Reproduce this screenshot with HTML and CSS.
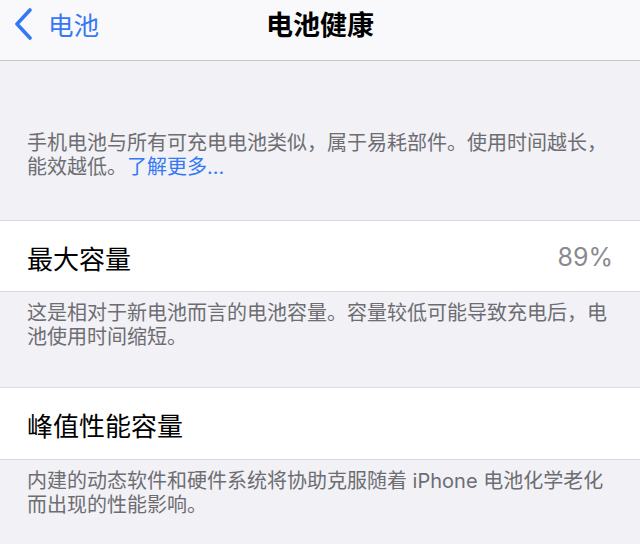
FILE: index.html
```
<!DOCTYPE html>
<html lang="zh">
<head>
<meta charset="utf-8">
<link rel="stylesheet" href="styles.css">
</head>
<body>
<header class="nav">
  <div class="back">
    <svg class="chev" width="22" height="34" viewBox="0 0 22 34"><polyline points="17,2 4,16 17,30" fill="none" stroke="#3478f6" stroke-width="3.6" stroke-linecap="round" stroke-linejoin="round"/></svg>
    <span class="back-text">电池</span>
  </div>
  <div class="title">电池健康</div>
  <div></div>
</header>
<main>
  <p class="intro">手机电池与所有可充电电池类似，属于易耗部件。使用时间越长，能效越低。<a class="link">了解更多...</a></p>
  <div class="row row-first">
    <span class="label">最大容量</span>
    <span class="value">89%</span>
  </div>
  <p class="foot foot-first">这是相对于新电池而言的电池容量。容量较低可能导致充电后，电池使用时间缩短。</p>
  <div class="row row-second">
    <span class="label">峰值性能容量</span>
  </div>
  <p class="foot">内建的动态软件和硬件系统将协助克服随着 iPhone 电池化学老化而出现的性能影响。</p>
</main>
</body>
</html>
```
FILE: styles.css
```
* { box-sizing: border-box; }
html, body { margin: 0; padding: 0; }
body {
  background: #f1f1f6;
  font-family: "Inter", "Noto Sans CJK SC", sans-serif;
  width: 640px;
  height: 544px;
  overflow: hidden;
}
.nav {
  height: 61px;
  background: #f9f9fb;
  border-bottom: 1px solid #c8c8cc;
  display: grid;
  grid-template-columns: 1fr auto 1fr;
  align-items: center;
  padding: 0 0 12px 0;
}
.back {
  display: flex;
  align-items: center;
  padding-left: 13px;
  color: #3478f6;
}
.chev { display: block; margin-top: 1px; }
.back-text {
  font-family: "Noto Sans CJK SC", sans-serif;
  font-size: 25.5px;
  line-height: 30px;
  margin-left: 13px;
}
.title {
  font-family: "Noto Sans CJK SC", sans-serif;
  font-size: 27px;
  font-weight: 700;
  line-height: 30px;
  color: #000;
}
main { margin: 0; }
.intro, .foot {
  margin: 0;
  font-family: "Inter", "Noto Sans CJK SC", sans-serif;
  font-size: 20px;
  line-height: 24px;
  color: #6d6d72;
  padding: 9px 30px 38px 27px;
}
.intro { padding: 70px 30px 41px 27px; }
.link { color: #3478f6; text-decoration: none; }
.row {
  background: #fff;
  border-top: 1px solid #dcdce0;
  border-bottom: 1px solid #dcdce0;
  display: flex;
  align-items: center;
  justify-content: space-between;
  padding: 2px 27px 0 27px;
}
.row-first { height: 72px; }
.row-second { height: 73px; }
.label {
  font-family: "Noto Sans CJK SC", sans-serif;
  font-size: 26px;
  color: #000;
}
.value {
  font-family: "Inter", sans-serif;
  font-size: 25px;
  color: #8a8a8e;
}
```
